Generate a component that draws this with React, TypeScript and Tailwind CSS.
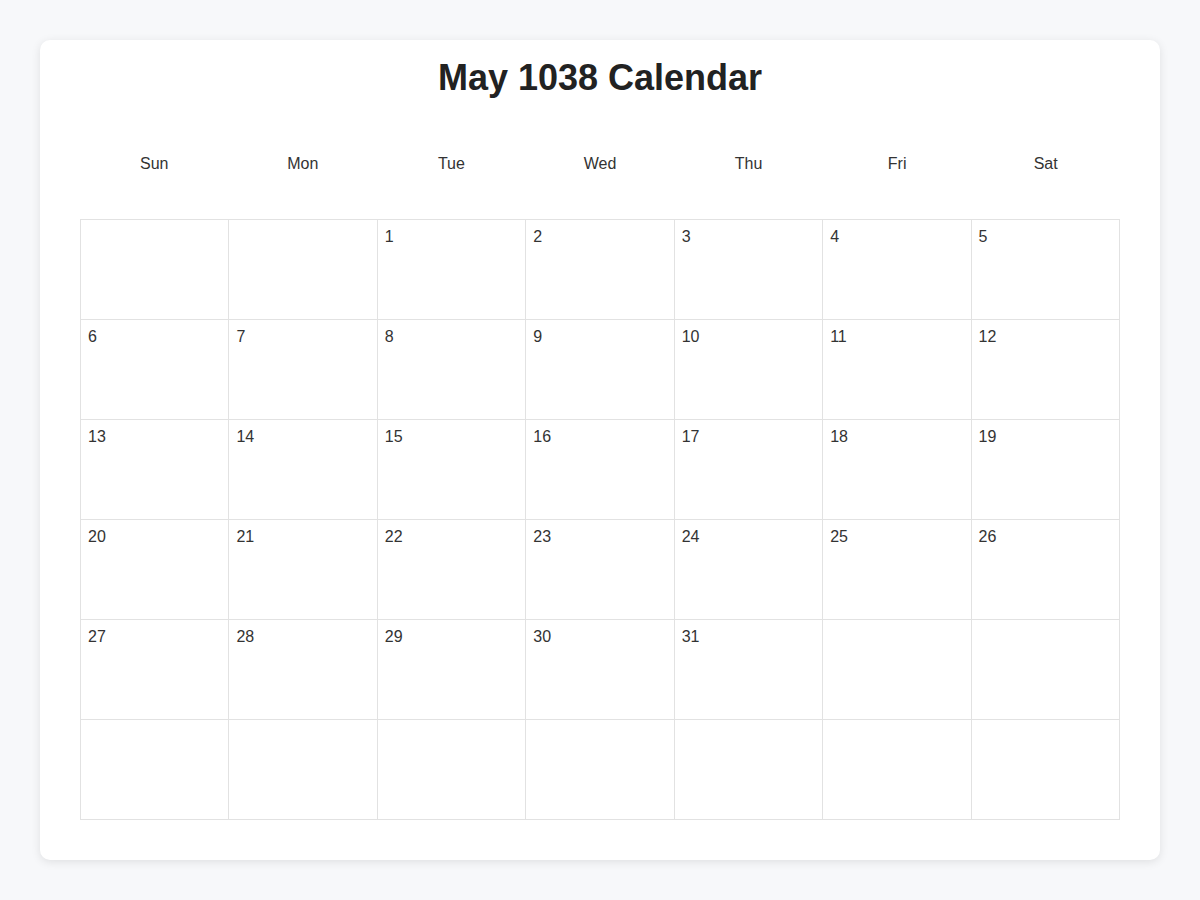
const WEEKDAYS = ['Sun', 'Mon', 'Tue', 'Wed', 'Thu', 'Fri', 'Sat'];

// May 1038 starts on a Tuesday; six rows of seven cells
const OFFSET = 2;
const DAYS = 31;
const cells = Array.from({ length: 42 }, (_, i) => {
  const d = i - OFFSET + 1;
  return d >= 1 && d <= DAYS ? d : null;
});

export default function App() {
  return (
    <div
      className="min-h-screen bg-[#f7f8fa] p-10"
      style={{ fontFamily: '"Liberation Sans", Arial, sans-serif' }}
    >
      <div className="w-[1120px] rounded-[10px] bg-white px-10 pt-4 pb-10 shadow-[0_2px_10px_rgba(0,0,0,0.1)]">
        <h1 className="h-[44px] text-center text-[36px] leading-[44px] font-bold text-[#222]">
          May 1038 Calendar
        </h1>
        <div className="mt-[32px] grid h-[64px] grid-cols-7 items-center">
          {WEEKDAYS.map((d) => (
            <div key={d} className="text-center text-base text-[#333]">
              {d}
            </div>
          ))}
        </div>
        <div className="mt-[23px] grid grid-cols-7 border-t border-l border-[#e2e2e2]">
          {cells.map((d, i) => (
            <div
              key={i}
              className="h-[100px] border-r border-b border-[#e2e2e2] px-[7px] py-2 text-base leading-[18px] text-[#333]"
            >
              {d}
            </div>
          ))}
        </div>
      </div>
    </div>
  );
}
